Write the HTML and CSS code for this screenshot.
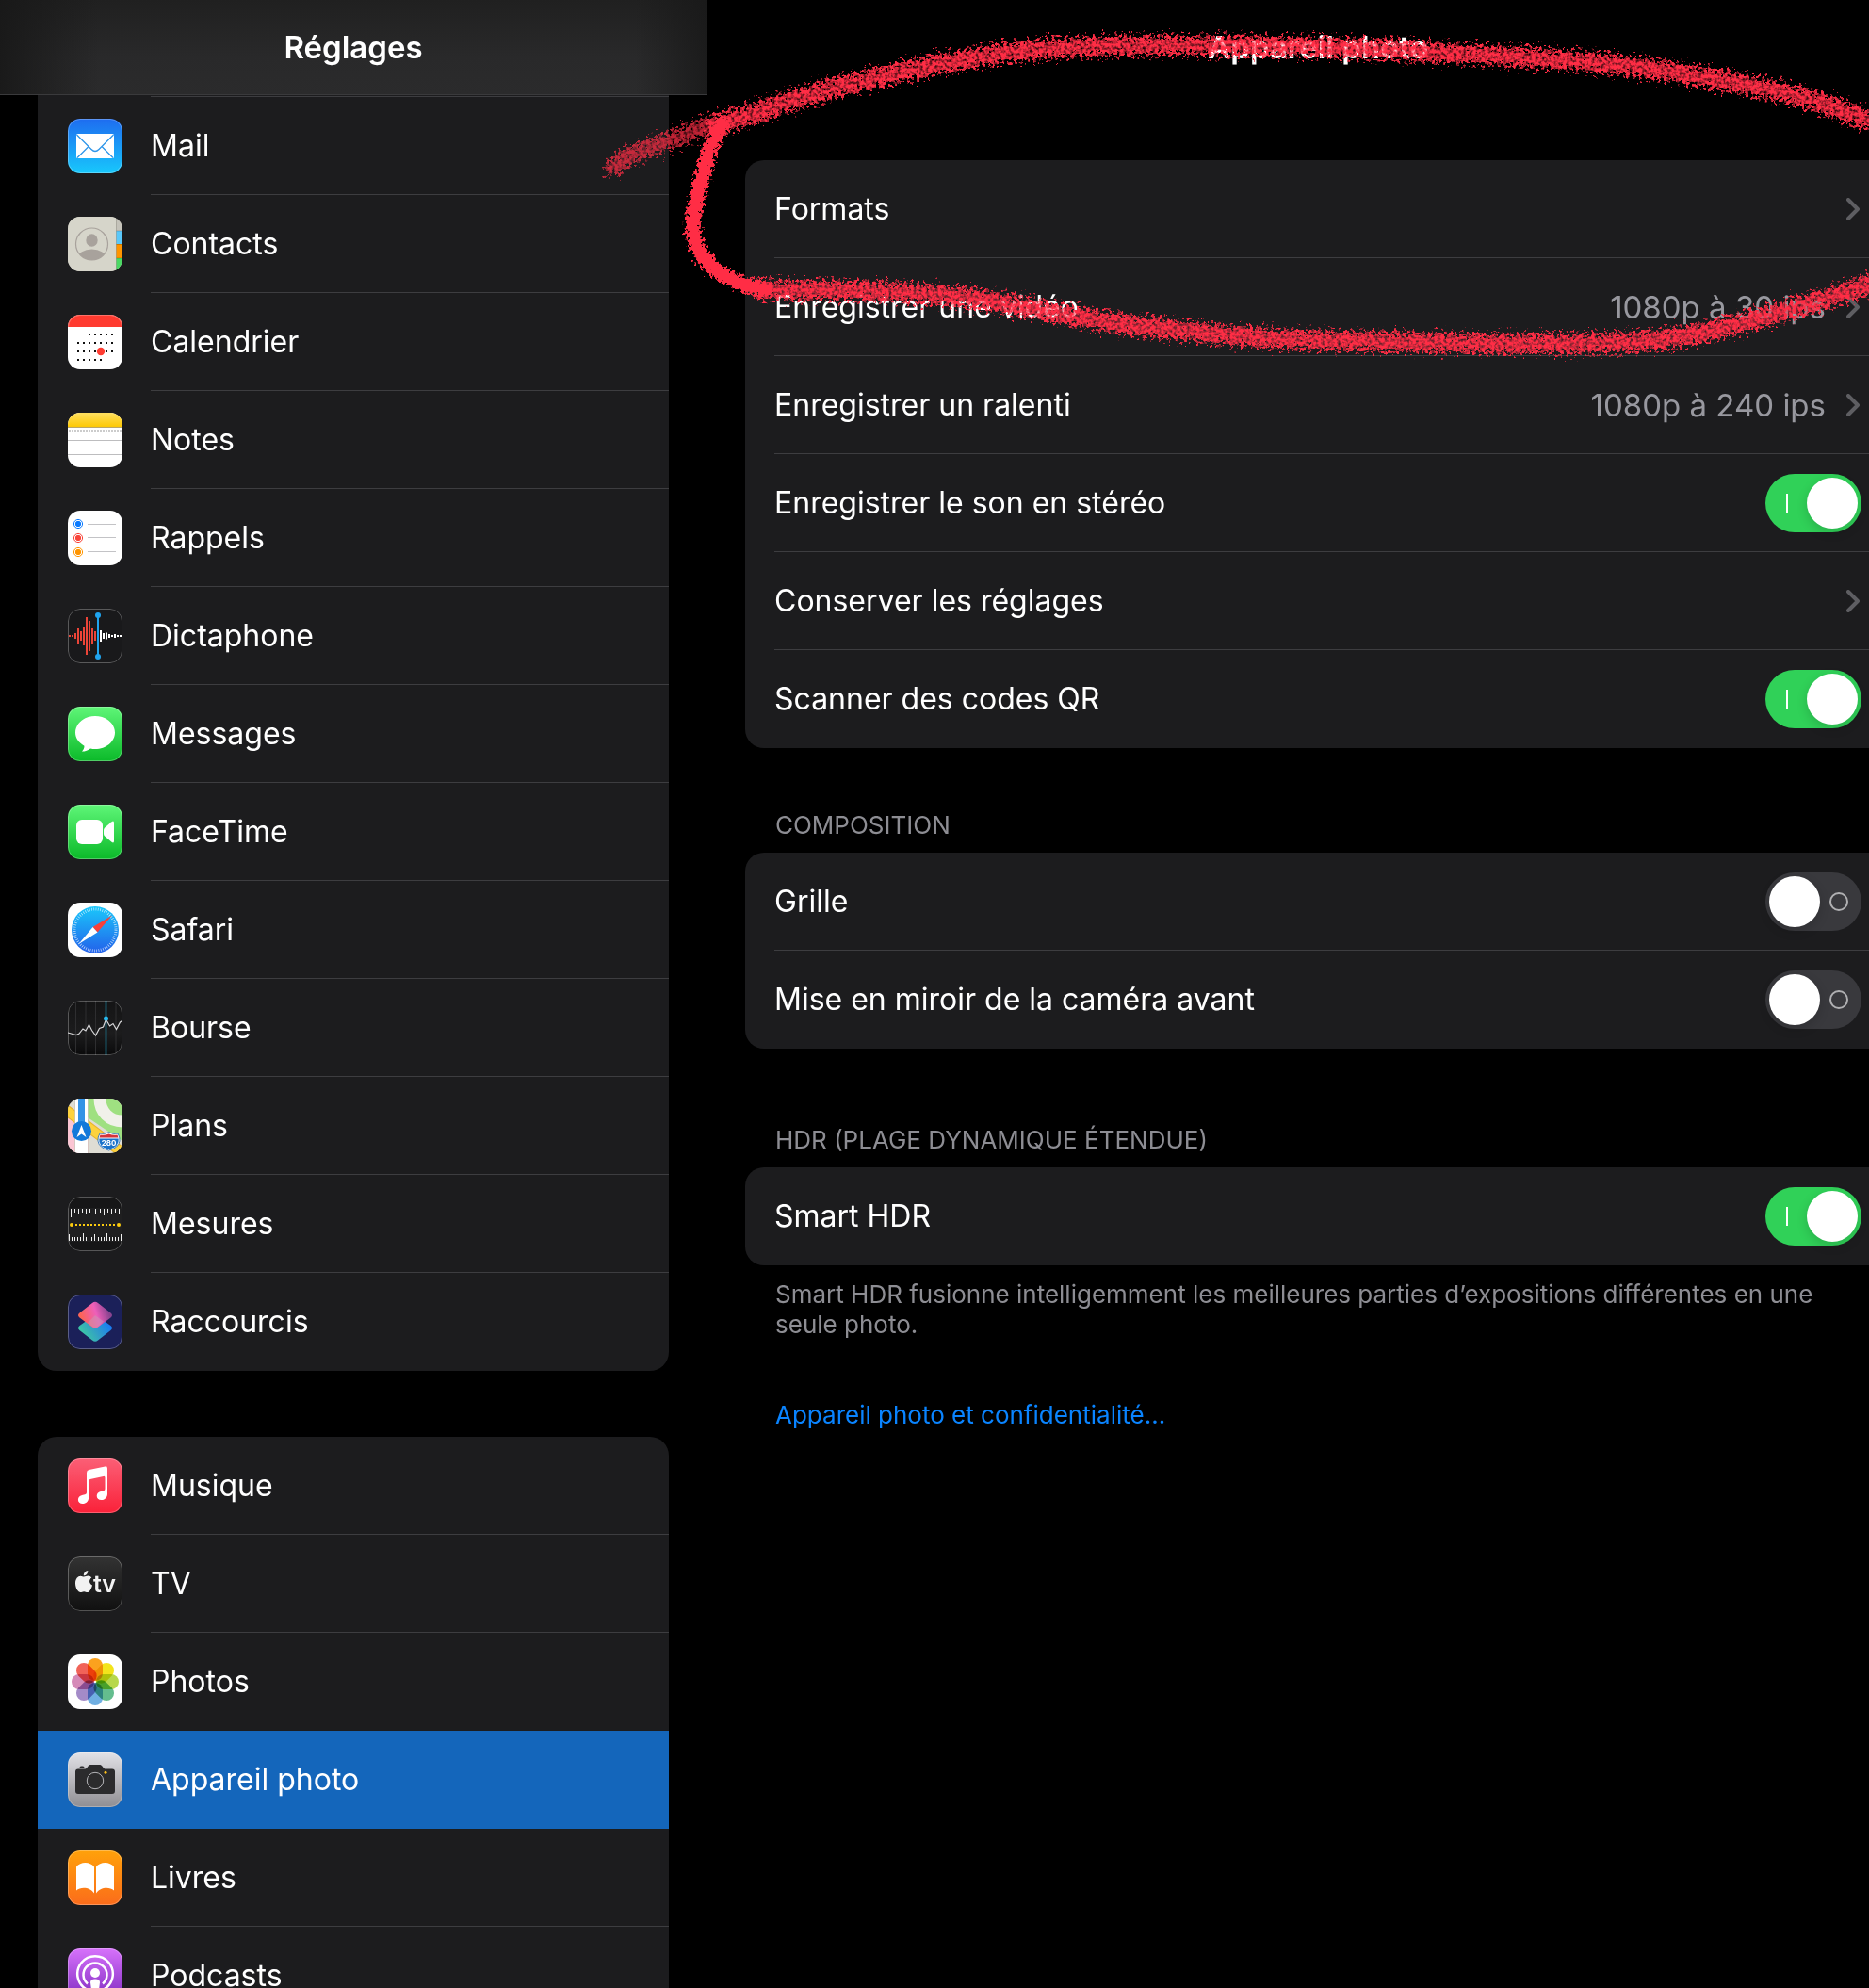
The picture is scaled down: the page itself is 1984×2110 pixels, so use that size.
FILE: index.html
```html
<!DOCTYPE html>
<html lang="fr">
<head>
<meta charset="utf-8">
<meta name="viewport" content="width=device-width, initial-scale=1">
<title>Réglages</title>
<link rel="stylesheet" href="styles.css">
</head>
<body>
<div class="app">
  <aside class="sidebar">
    <header class="bar bar-sidebar"><h1 class="title">Réglages</h1></header>
    <nav class="lists" aria-label="Réglages">
      <ul class="group group-continued">
        <li><a class="item" href="#mail">
          <svg class="icon" viewBox="0 0 58 58" aria-hidden="true">
            <defs><linearGradient id="gMail" x2="0" y2="1"><stop stop-color="#1e6cf0"/><stop offset="1" stop-color="#18c8fc"/></linearGradient></defs>
            <rect width="58" height="58" fill="url(#gMail)"/><rect x="9" y="16" width="40" height="26" rx="1.5" fill="#fff"/>
            <path d="M9.500 17l15.500 15.500q4 4 8 0L48.500 17M10 41.500l12-12M48 41.500l-12-12" fill="none" stroke="#2f96ea" stroke-width="1.300"/>
            <rect class="rim" x=".5" y=".5" width="57" height="57" rx="12.500"/>
          </svg><span class="name">Mail</span></a></li>
        <li><a class="item" href="#contacts">
          <svg class="icon" viewBox="0 0 58 58" aria-hidden="true">
            <defs><clipPath id="cFace"><circle cx="25.500" cy="29" r="17"/></clipPath></defs>
            <rect width="58" height="58" fill="#c5c3ba"/><rect x="51" y="15" width="7" height="14" fill="#5ac8fa"/><rect x="51" y="29" width="7" height="15" fill="#ff9500"/><rect x="51" y="44" width="7" height="14" fill="#4cd964"/>
            <path d="M51 15h7M51 29.500h7M51 44h7" stroke="#000" stroke-opacity=".2"/>
            <rect width="51" height="58" fill="#d6d5ca"/><path d="M51.500 2v54" stroke="#9a978d" stroke-opacity=".6"/>
            <g fill="#a8a29c"><ellipse cx="25.500" cy="25" rx="6.200" ry="6.800"/><ellipse cx="25.500" cy="43.500" rx="15" ry="9" clip-path="url(#cFace)"/></g>
            <circle cx="25.500" cy="29" r="17" fill="none" stroke="#a8a29c" stroke-width="1.200"/>
          </svg><span class="name">Contacts</span></a></li>
        <li><a class="item" href="#calendrier">
          <svg class="icon" viewBox="0 0 58 58" aria-hidden="true">
            <rect width="58" height="58" fill="#fff"/><rect width="58" height="13" fill="#ff3b30"/>
            <g stroke="#111" stroke-width="2" stroke-dasharray="2 4"><path d="M22 21h26M10 30h38M10 39h38M10 48h26"/></g>
            <circle cx="35" cy="39" r="4.200" fill="#ff3b30"/>
            <rect class="rim" x=".5" y=".5" width="57" height="57" rx="12.500"/>
          </svg><span class="name">Calendrier</span></a></li>
        <li><a class="item" href="#notes">
          <svg class="icon" viewBox="0 0 58 58" aria-hidden="true">
            <defs><linearGradient id="gNotes" x2="0" y2="1"><stop stop-color="#ffe061"/><stop offset="1" stop-color="#fdc905"/></linearGradient></defs>
            <rect width="58" height="58" fill="#fff"/><rect width="58" height="15" fill="url(#gNotes)"/>
            <path d="M0 15.500h58" stroke="#b9a76a"/><path d="M1 19h57" stroke="#ccc" stroke-width="2" stroke-dasharray="2 1"/>
            <path d="M0 29.500h58M0 44.500h58" stroke="#bdbdbf"/>
          </svg><span class="name">Notes</span></a></li>
        <li><a class="item" href="#rappels">
          <svg class="icon" viewBox="0 0 58 58" aria-hidden="true">
            <rect width="58" height="58" fill="#fff"/>
            <g fill="#0a7aff" stroke="#0a7aff"><circle cx="11" cy="14" r="4.600" fill="none"/><circle cx="11" cy="14" r="2.700"/></g>
            <g fill="#f9443a" stroke="#f9443a"><circle cx="11" cy="29" r="4.600" fill="none"/><circle cx="11" cy="29" r="2.700"/></g>
            <g fill="#ff9500" stroke="#ff9500"><circle cx="11" cy="44" r="4.600" fill="none"/><circle cx="11" cy="44" r="2.700"/></g>
            <path d="M21 14.500h30M21 28.500h30M21 43.500h30" stroke="#c3c3c6"/>
          </svg><span class="name">Rappels</span></a></li>
        <li><a class="item" href="#dictaphone">
          <svg class="icon" viewBox="0 0 58 58" aria-hidden="true">
            <rect width="58" height="58" fill="#19191b"/>
            <path d="M2 28v2M5 28v2M8 26v6M11 21v16M14 24v10M17 19v20M20 9v40M23 13v32M26 21v16M29 24v10" stroke="#eb4438" stroke-width="2"/>
            <path d="M35 23v12M38 26v6M41 25.500v7M44 27v4M47 28v2M50 27v4M53 28v2M56 28v2" stroke="#fff" stroke-width="2"/>
            <path d="M32 7v44" stroke="#1fa4ef" stroke-width="2"/><circle cx="32" cy="7" r="3" fill="#1fa4ef"/><circle cx="32" cy="51" r="3" fill="#1fa4ef"/>
            <rect class="rim" x=".5" y=".5" width="57" height="57" rx="12.500"/>
          </svg><span class="name">Dictaphone</span></a></li>
        <li><a class="item" href="#messages">
          <svg class="icon" viewBox="0 0 58 58" aria-hidden="true">
            <defs><linearGradient id="gGreen" x2="0" y2="1"><stop stop-color="#5ff678"/><stop offset="1" stop-color="#0bba29"/></linearGradient></defs>
            <rect width="58" height="58" fill="url(#gGreen)"/>
            <path d="M29 10C17.400 10 8 17.800 8 27.500c0 6 3.500 10.500 9.500 14.200 0 2.300-1 4.300-2.700 5.900 3.700-.1 6.900-1.500 9.200-3.200 1.600.4 3.300.6 5 .6 11.600 0 21-7.800 21-17.500S40.600 10 29 10z" fill="#fff"/>
            <rect class="rim" x=".5" y=".5" width="57" height="57" rx="12.500"/>
          </svg><span class="name">Messages</span></a></li>
        <li><a class="item" href="#facetime">
          <svg class="icon" viewBox="0 0 58 58" aria-hidden="true">
            <rect width="58" height="58" fill="url(#gGreen)"/><rect x="9" y="16" width="28" height="26" rx="6" fill="#fff"/>
            <path d="M38 27q0-1.500 1.200-2.600l7.300-6.200q2.500-1.600 2.500 1v19.600q0 2.600-2.500 1l-7.300-6.200Q38 32.500 38 31z" fill="#fff"/>
            <rect class="rim" x=".5" y=".5" width="57" height="57" rx="12.500"/>
          </svg><span class="name">FaceTime</span></a></li>
        <li><a class="item" href="#safari">
          <svg class="icon" viewBox="0 0 58 58" aria-hidden="true">
            <defs><linearGradient id="gSafari" x2="0" y2="1"><stop stop-color="#1ac8fb"/><stop offset="1" stop-color="#2360ea"/></linearGradient></defs>
            <rect width="58" height="58" fill="#fff"/><circle cx="29" cy="29" r="25" fill="url(#gSafari)"/>
            <circle cx="29" cy="29" r="22" fill="none" stroke="#fff" stroke-opacity=".75" stroke-width="3" stroke-dasharray=".7 1.604"/>
            <path d="M47 13.500L26.500 26l5 5.500z" fill="#f8403a"/><path d="M26.500 26l5 5.500L11.500 44z" fill="#fff"/>
          </svg><span class="name">Safari</span></a></li>
        <li><a class="item" href="#bourse">
          <svg class="icon" viewBox="0 0 58 58" aria-hidden="true">
            <defs><linearGradient id="gStocks" x2="0" y2="1"><stop stop-color="#141415"/><stop offset=".6" stop-color="#1c1c1d"/><stop offset="1" stop-color="#0a0a0b"/></linearGradient></defs>
            <rect width="58" height="58" fill="url(#gStocks)"/><path d="M8.500 0v58M19 0v58M29.500 0v58M51 0v58" stroke="#2e2e30"/>
            <path d="M40.500 0v58" stroke="#1d9cbf" stroke-width="1.500"/>
            <path d="M0 34l9 2.500 3-1.500 4-5 3 2 3.500-6.500 3 6 4 5.500 4-7.500 4-1.500 3-8 4 7 3.500-2.500 3.500 6 4-7.500 3-2" fill="none" stroke="#d5d5d7" stroke-width="1.200"/>
            <circle cx="40.500" cy="19" r="2.500" fill="#27b9ef"/>
            <rect class="rim" x=".5" y=".5" width="57" height="57" rx="12.500"/>
          </svg><span class="name">Bourse</span></a></li>
        <li><a class="item" href="#plans">
          <svg class="icon" viewBox="0 0 58 58" aria-hidden="true">
            <rect width="58" height="58" fill="#dfddd4"/><path d="M0 18l22 18v22H0z" fill="#fbc5d3"/>
            <path d="M21 0h37v45L21 20z" fill="#9fe081"/><path d="M34 0c0 14 10 24 24 24" fill="none" stroke="#f1f1ea" stroke-width="13"/>
            <path d="M-2 12L56 56" stroke="#e7b42c" stroke-width="11"/><path d="M-2 12L56 56" stroke="#fdd23d" stroke-width="9"/>
            <path d="M8 0h13v58H8z" fill="#fff"/><path d="M7.500 0v58M21.500 0v58" stroke="#c9c6bb" stroke-opacity=".7"/><path d="M11 0h7v30h-7z" fill="#3393e6"/>
            <circle cx="14.500" cy="34.500" r="10.500" fill="#1279da"/><path d="M14.500 28l5 13-5-3.500-5 3.500z" fill="#fff"/>
            <path d="M34 37q4.500 1.500 9.500-1.300 5 2.800 9.500 1.300 2.500 4 2 8-1 7-11.500 10-10.500-3-11.500-10-.5-4 2-8z" fill="#fff" stroke="#1666b9" stroke-width=".8"/>
            <path d="M34.500 38.500q4.500 1 9-1 4.500 2 9 1l1 3h-20z" fill="#d5353b"/><path d="M33.300 42.500h20.400q1.200 8.500-10.200 11.500-11.400-3-10.200-11.500z" fill="#1a72ca"/>
            <text x="43.500" y="49.500" text-anchor="middle" class="shield">280</text>
          </svg><span class="name">Plans</span></a></li>
        <li><a class="item" href="#mesures">
          <svg class="icon" viewBox="0 0 58 58" aria-hidden="true">
            <rect width="58" height="58" fill="#161617"/><rect y="12" width="58" height="36" fill="#1f1f20"/>
            <path d="M3.500 13v9M7.500 13v4M11.500 13v6M15.500 13v4M19.500 13v6M23.500 13v4M29.500 13v6M34.500 13v4M38.500 13v7M42.500 13v4M46.500 13v6M50.500 13v4M54.500 13v6" stroke="#eee"/>
            <path d="M1.500 40v7M4.500 43v4M7.500 43v4M10.500 43v4M13.500 43v4M16.500 39v8M19.500 43v4M22.500 43v4M25.500 43v4M28.500 40v7M32.500 43v4M35.500 43v4M38.500 43v4M41.500 39v8M44.500 43v4M47.500 43v4M50.500 43v4M53.500 43v4M56.500 40v7" stroke="#eee"/>
            <path d="M8 30h42" stroke="#fccc0e" stroke-width="2" stroke-dasharray="2 2"/><circle cx="4" cy="30" r="2" fill="#fccc0e"/><circle cx="54" cy="30" r="2" fill="#fccc0e"/>
            <rect class="rim" x=".5" y=".5" width="57" height="57" rx="12.500"/>
          </svg><span class="name">Mesures</span></a></li>
        <li><a class="item" href="#raccourcis">
          <svg class="icon" viewBox="0 0 58 58" aria-hidden="true">
            <defs>
              <linearGradient id="gLow" x1="0" y1=".8" x2="1" y2=".3"><stop stop-color="#3fd59a"/><stop offset=".5" stop-color="#329fc6"/><stop offset="1" stop-color="#1476fb"/></linearGradient>
              <linearGradient id="gTop" x1=".1" y1=".6" x2=".9" y2=".4"><stop stop-color="#fb6457"/><stop offset=".55" stop-color="#ee5fba"/><stop offset="1" stop-color="#8a4490"/></linearGradient>
            </defs>
            <rect width="58" height="58" fill="#1b2059"/>
            <path d="M26 23.500q3-2 6 0l13.500 9.500q3 2.500 0 5L32 48.500q-3 2.500-6 0L12.500 38q-3-2.500 0-5z" fill="url(#gLow)"/>
            <path d="M26 9q3-2.500 6 0l13.500 10.500q3 2.500 0 5L32 34.500q-3 2.500-6 0l-13.500-10q-3-2.500 0-5z" fill="url(#gTop)"/>
            <path d="M29 22l9 6.500-6 5.500q-3 2.500-6 0l-5-4z" fill="#c89ab4" fill-opacity=".5"/>
            <rect class="rim" x=".5" y=".5" width="57" height="57" rx="12.500"/>
          </svg><span class="name">Raccourcis</span></a></li>
      </ul>

      <ul class="group">
        <li><a class="item" href="#musique">
          <svg class="icon" viewBox="0 0 58 58" aria-hidden="true">
            <defs><linearGradient id="gMusic" x2="0" y2="1"><stop stop-color="#fb5f76"/><stop offset="1" stop-color="#fa2139"/></linearGradient></defs>
            <rect width="58" height="58" fill="url(#gMusic)"/>
            <path d="M20 15q0-2.500 2.500-3l17-3.600q2.500-.4 2.500 2v27c0 4-3 6.600-6.500 6.600-3 0-4.800-1.900-4.800-4.300 0-2.700 1.800-4.400 5-5l2.300-.5q1.500-.4 1.500-2V20.500q0-2-1.800-1.600l-14 3q-1.500.4-1.500 2V41c0 4.500-3 7-6.500 7-3 0-4.800-1.900-4.800-4.300 0-2.700 1.800-4.400 5-5l2.300-.5q1.800-.4 1.800-2z" fill="#fff"/>
            <rect class="rim" x=".5" y=".5" width="57" height="57" rx="12.500"/>
          </svg><span class="name">Musique</span></a></li>
        <li><a class="item" href="#tv">
          <svg class="icon" viewBox="0 0 58 58" aria-hidden="true">
            <defs><linearGradient id="gTv" x2="0" y2="1"><stop stop-color="#333"/><stop offset="1" stop-color="#101010"/></linearGradient></defs>
            <rect width="58" height="58" fill="url(#gTv)"/>
            <path d="M17 21.500c1.500 0 2.500-.9 4.500-.9 1.600 0 3 .8 3.800 2-3.300 2-2.800 6.500.7 7.800-.9 3.700-3.200 7.600-5.300 7.600-1.300 0-2-.8-3.600-.8s-2.300.8-3.600.8C11 38 8 33.500 8 28.500c0-4.800 2.700-7.800 5.500-7.800 1.500 0 2.500.8 3.500.8zM16.800 20.300c-.1-2.800 1.900-5 4.500-5.300.3 2.900-2 5.300-4.500 5.300z" fill="#f2f2f2"/>
            <text x="27" y="38" class="tvmark">tv</text>
            <rect class="rim" x=".5" y=".5" width="57" height="57" rx="12.500"/>
          </svg><span class="name">TV</span></a></li>
        <li><a class="item" href="#photos">
          <svg class="icon" viewBox="0 0 58 58" aria-hidden="true">
            <rect width="58" height="58" fill="#fff"/>
            <g class="petals">
              <rect x="21" y="4" width="16" height="24" rx="8" fill="#fba21e"/>
              <rect x="21" y="4" width="16" height="24" rx="8" fill="#f3e41c" transform="rotate(45 29 29)"/>
              <rect x="21" y="4" width="16" height="24" rx="8" fill="#b7d84c" transform="rotate(90 29 29)"/>
              <rect x="21" y="4" width="16" height="24" rx="8" fill="#64bd8e" transform="rotate(135 29 29)"/>
              <rect x="21" y="4" width="16" height="24" rx="8" fill="#70afe2" transform="rotate(180 29 29)"/>
              <rect x="21" y="4" width="16" height="24" rx="8" fill="#a48bc8" transform="rotate(225 29 29)"/>
              <rect x="21" y="4" width="16" height="24" rx="8" fill="#d58bb8" transform="rotate(270 29 29)"/>
              <rect x="21" y="4" width="16" height="24" rx="8" fill="#f16358" transform="rotate(315 29 29)"/>
            </g>
          </svg><span class="name">Photos</span></a></li>
        <li><a class="item item-current" href="#appareil-photo" aria-current="page">
          <svg class="icon" viewBox="0 0 58 58" aria-hidden="true">
            <defs><linearGradient id="gCam" x2="0" y2="1"><stop stop-color="#e2e2e7"/><stop offset="1" stop-color="#8f8e93"/></linearGradient></defs>
            <rect width="58" height="58" fill="url(#gCam)"/>
            <path d="M12.500 16.500v-.5q0-1.500 1.500-1.500h2q1.500 0 1.500 1.500v.5z" fill="#2b2b2d"/>
            <path d="M11 17.500h6c2.500 0 3-.8 4-2.300 1-1.600 2-2.200 4-2.200h8c2 0 3 .6 4 2.200 1 1.500 1.500 2.300 4 2.300h6q3 0 3 3V41q0 3-3 3H11q-3 0-3-3V20.500q0-3 3-3z" fill="#2b2b2d"/>
            <circle cx="29" cy="30" r="8.700" fill="none" stroke="#b4b4b8"/><circle cx="40" cy="21.200" r="1.500" fill="#fbbf1c"/>
            <rect class="rim" x=".5" y=".5" width="57" height="57" rx="12.500"/>
          </svg><span class="name">Appareil photo</span></a></li>
        <li><a class="item" href="#livres">
          <svg class="icon" viewBox="0 0 58 58" aria-hidden="true">
            <defs><linearGradient id="gBooks" x2="0" y2="1"><stop stop-color="#ffa10a"/><stop offset="1" stop-color="#fb6c1b"/></linearGradient></defs>
            <rect width="58" height="58" fill="url(#gBooks)"/>
            <path d="M28 17.500v28c-4-6.500-14-7.500-19-3V17.500c4-6 15-6 19 0zM30 17.500v28c4-6.500 14-7.500 19-3V17.500c-4-6-15-6-19 0z" fill="#fff"/>
            <rect class="rim" x=".5" y=".5" width="57" height="57" rx="12.500"/>
          </svg><span class="name">Livres</span></a></li>
        <li><a class="item" href="#podcasts">
          <svg class="icon" viewBox="0 0 58 58" aria-hidden="true">
            <defs><linearGradient id="gPod" x2="0" y2="1"><stop stop-color="#d772fb"/><stop offset="1" stop-color="#7a27bd"/></linearGradient></defs>
            <rect width="58" height="58" fill="url(#gPod)"/>
            <g fill="none" stroke="#fff" stroke-width="2.500"><path d="M20 43.500A18.800 18.800 0 1 1 38 43.500"/><path d="M21 37.500A12.500 12.500 0 1 1 37 37.500"/></g>
            <circle cx="29" cy="26" r="5" fill="#fff"/><path d="M24 36q0-3.500 5-3.500t5 3.500l-1.500 12q-.5 3-3.500 3t-3.500-3z" fill="#fff"/>
            <rect class="rim" x=".5" y=".5" width="57" height="57" rx="12.500"/>
          </svg><span class="name">Podcasts</span></a></li>
      </ul>
    </nav>
  </aside>

  <main class="detail">
    <header class="bar bar-detail"><h2 class="title">Appareil photo</h2></header>

    <section class="section section-first">
      <div class="card">
        <a class="row" href="#formats"><span class="label">Formats</span><svg class="chevron" viewBox="0 0 14 24" aria-hidden="true"><path d="M2 2l10 10L2 22"/></svg></a>
        <a class="row" href="#video"><span class="label">Enregistrer une vidéo</span><span class="value">1080p à 30 ips</span><svg class="chevron" viewBox="0 0 14 24" aria-hidden="true"><path d="M2 2l10 10L2 22"/></svg></a>
        <a class="row" href="#ralenti"><span class="label">Enregistrer un ralenti</span><span class="value">1080p à 240 ips</span><svg class="chevron" viewBox="0 0 14 24" aria-hidden="true"><path d="M2 2l10 10L2 22"/></svg></a>
        <label class="row"><span class="label">Enregistrer le son en stéréo</span><input class="switch" type="checkbox" checked></label>
        <a class="row" href="#conserver"><span class="label">Conserver les réglages</span><svg class="chevron" viewBox="0 0 14 24" aria-hidden="true"><path d="M2 2l10 10L2 22"/></svg></a>
        <label class="row"><span class="label">Scanner des codes QR</span><input class="switch" type="checkbox" checked></label>
      </div>
    </section>

    <section class="section">
      <h3 class="caption">COMPOSITION</h3>
      <div class="card">
        <label class="row"><span class="label">Grille</span><input class="switch" type="checkbox"></label>
        <label class="row"><span class="label">Mise en miroir de la caméra avant</span><input class="switch" type="checkbox"></label>
      </div>
    </section>

    <section class="section section-last">
      <h3 class="caption">HDR (PLAGE DYNAMIQUE ÉTENDUE)</h3>
      <div class="card">
        <label class="row"><span class="label">Smart HDR</span><input class="switch" type="checkbox" checked></label>
      </div>
      <p class="note">Smart HDR fusionne intelligemment les meilleures parties d’expositions différentes en une seule photo.</p>
    </section>

    <a class="privacy" href="#confidentialite">Appareil photo et confidentialité…</a>
  </main>

  <svg class="scribble" viewBox="0 0 1984 400" aria-hidden="true">
    <defs>
      <filter id="crayon" filterUnits="userSpaceOnUse" x="600" y="0" width="1400" height="400" color-interpolation-filters="sRGB">
        <feTurbulence type="fractalNoise" baseFrequency=".3" numOctaves="2" seed="4" result="n"/>
        <feDisplacementMap in="SourceGraphic" in2="n" scale="28" xChannelSelector="R" yChannelSelector="G" result="d"/>
        <feColorMatrix in="n" type="matrix" values="0 0 0 0 0  0 0 0 0 0  0 0 0 0 0  0 0 2 0 -.15" result="g"/>
        <feComposite in="d" in2="g" operator="in"/>
        <feGaussianBlur stdDeviation=".7"/>
      </filter>
      <filter id="wax" filterUnits="userSpaceOnUse" x="600" y="0" width="1400" height="400" color-interpolation-filters="sRGB">
        <feTurbulence type="fractalNoise" baseFrequency=".3" numOctaves="2" seed="9" result="n"/>
        <feDisplacementMap in="SourceGraphic" in2="n" scale="16" xChannelSelector="R" yChannelSelector="G"/>
        <feGaussianBlur stdDeviation=".6"/>
      </filter>
    </defs>
    <g class="stroke" filter="url(#crayon)">
      <path stroke-width="18" stroke-opacity=".75" d="M652 177C665 163 700 154 728 142S760 132 780 124"/>
      <path stroke-width="20" d="M760 133C775 128 792 123 809 117C838 107 868 98 898 90C928 83 957 76 987 70C1017 64 1046 59 1076 55C1120 50 1180 48 1254 48S1430 50 1518 55S1680 64 1736 71S1870 92 1911 103S1965 121 2000 135"/>
      <path stroke-width="20" d="M808 307C838 309 868 308 898 308S1010 313 1054 320S1150 340 1210 346S1330 360 1387 361S1640 368 1736 363C1775 360 1812 353 1845 344S1930 322 2000 296"/>
    </g>
    <g class="stroke" filter="url(#wax)">
      <path stroke-width="16" d="M767 131C755 150 751 166 748 178C741 205 734 225 736 248C740 270 752 282 768 292C782 301 795 305 812 307"/>
    </g>
  </svg>
</div>
</body>
</html>
```
FILE: styles.css
```css
*, *::before, *::after { box-sizing: border-box; }

body {
  margin: 0;
  background: #000;
  color: #fff;
  font: 400 32px/40px Inter, Roboto, "Liberation Sans", sans-serif;
}

a { color: inherit; text-decoration: none; }

.app {
  position: relative;
  display: flex;
  height: 100vh;
  overflow: hidden;
}

.bar {
  display: flex;
  align-items: center;
  justify-content: center;
  height: 100px;
}

.title { margin: 0; font-size: 33px; line-height: 40px; font-weight: 600; }

/* Sidebar */

.sidebar {
  flex: 0 0 751px;
  border-right: 1px solid #38383a;
}

.bar-sidebar {
  background:
    linear-gradient(90deg, rgba(24, 24, 24, .9), transparent 14%, transparent 90%, rgba(24, 24, 24, .8)),
    linear-gradient(#202020, #29292a 60%, #2b2b2c);
  height: 101px;
  border-bottom: 1px solid #3a3a3c;
}

.lists {
  display: flex;
  flex-direction: column;
  gap: 70px;
  padding: 0 40px;
}

.group {
  margin: 0;
  padding: 0;
  list-style: none;
  background: #1c1c1e;
  border-radius: 20px;
  overflow: hidden;
}

/* The first list runs on from beneath the title bar. */
.group-continued { border-radius: 0 0 20px 20px; }
.group-continued::before {
  content: "";
  display: block;
  height: 2px;
  margin-left: 120px;
  border-bottom: 1px solid #3d3d40;
}

.item {
  display: flex;
  align-items: center;
  gap: 30px;
  height: 104px;
  padding-left: 32px;
}

.name {
  flex: 1;
  display: flex;
  align-items: center;
  height: 104px;
  border-bottom: 1px solid #3d3d40;
}

li:last-child .name,
li:has(+ li > .item-current) .name,
.item-current .name { border-bottom-color: transparent; }

.item-current { background: #1466bb; }

.icon {
  flex: none;
  width: 58px;
  height: 58px;
  border-radius: 13px;
}

.rim { fill: none; stroke: #fff; stroke-opacity: .28; }
.petals rect { mix-blend-mode: multiply; }
.petals { isolation: isolate; }
.shield { font: 700 8px Inter, sans-serif; fill: #fff; }
.tvmark { font: 600 25px Inter, sans-serif; fill: #f2f2f2; }

/* Detail pane */

.detail { flex: 1; min-width: 0; padding-left: 40px; }

.bar-detail { padding-left: 24px; }

.section { margin-bottom: 81px; }
.section-first { margin-top: 70px; margin-bottom: 66px; }
.section-last { margin-bottom: 64px; }

.card {
  background: #1c1c1e;
  border-radius: 20px 0 0 20px;
  padding-left: 31px;
}

.row {
  display: flex;
  align-items: center;
  height: 104px;
  padding-right: 8px;
  border-bottom: 1px solid #3d3d40;
}
.row:last-child { border-bottom-color: transparent; }

.label { flex: 1; }
.value { font-size: 33px; color: #98989f; }

.chevron {
  width: 14px;
  height: 24px;
  margin: 0 2px 0 22px;
  fill: none;
  stroke: #5e5e62;
  stroke-width: 4;
  stroke-linecap: round;
  stroke-linejoin: round;
}

.switch {
  appearance: none;
  display: flex;
  align-items: center;
  justify-content: space-between;
  width: 102px;
  height: 62px;
  margin: 0;
  padding: 0 14px 0 4px;
  border-radius: 31px;
  background: #39393d;
}
.switch::before {
  content: "";
  width: 54px;
  height: 54px;
  border-radius: 50%;
  background: #fff;
  box-shadow: 0 4px 12px rgba(0, 0, 0, .16);
}
.switch::after {
  content: "";
  width: 20px;
  height: 20px;
  border: 2px solid #b0b0b2;
  border-radius: 50%;
}
.switch:checked { flex-direction: row-reverse; padding: 0 4px 0 22px; background: #30d158; }
.switch:checked::after { width: 2px; border: 0; border-radius: 0; background: #fff; }

.caption,
.note,
.privacy {
  margin: 0;
  padding: 0 32px;
  font-size: 26px;
  line-height: 32px;
  font-weight: 400;
}
.caption { padding-bottom: 13px; color: #8d8d93; }
.note { padding-top: 15px; color: #8d8d93; }
.privacy { display: block; color: #0a84ff; }

/* Hand-drawn ring over both panes */

.scribble {
  position: absolute;
  top: 0;
  left: 0;
  width: 100%;
  pointer-events: none;
}
.stroke {
  fill: none;
  stroke: #ff2d45;
  stroke-linecap: round;
  stroke-linejoin: round;
}
```
